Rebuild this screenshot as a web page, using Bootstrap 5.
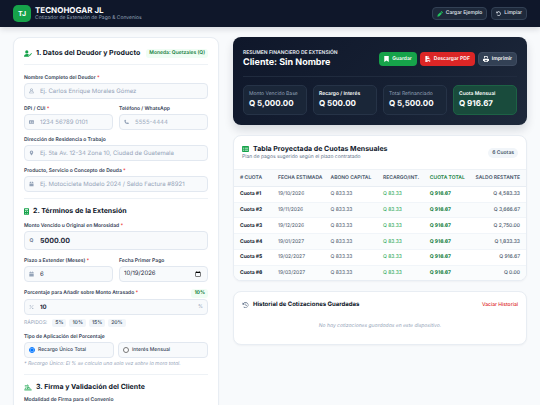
<!DOCTYPE html>
<html lang="es">
<head>
<meta charset="utf-8">
<meta name="viewport" content="width=device-width, initial-scale=1">
<title>TECNOHOGAR JL</title>
<link rel="stylesheet" href="https://cdn.jsdelivr.net/npm/bootstrap@5.3.0/dist/css/bootstrap.min.css">
<style>
:root{--navy:#0f172a;--green:#16a34a;--line:#e8edf3;--muted:#64748b;--soft:#94a3b8}
body{font-family:Inter,"Liberation Sans",sans-serif;font-size:5px;line-height:8px;color:#334155;background:#f8fafc;text-rendering:geometricPrecision}
input,button{text-rendering:inherit}
svg{fill:currentColor;flex:none;display:block}
.topbar{background:var(--navy);box-shadow:0 2px 6px rgba(15,23,42,.15);padding:5px 13px}
.logo{width:18px;height:17px;border-radius:5px;background:var(--green);color:#fff;font-size:7px;font-weight:700}
.brand{font-size:8px;line-height:9px;font-weight:700;color:#fff}
.brand-sub{color:var(--soft);line-height:7px}
.btn{--bs-btn-font-size:5px;--bs-btn-line-height:8px;--bs-btn-padding-x:4px;--bs-btn-padding-y:2px;--bs-btn-border-radius:4px;--bs-btn-font-weight:600;gap:3px;white-space:nowrap}
.btn-top{--bs-btn-color:#e2e8f0;--bs-btn-bg:#1e293b;--bs-btn-border-color:#334155;--bs-btn-line-height:9px;--bs-btn-padding-y:1px;--bs-btn-font-weight:500;--bs-btn-hover-color:#fff;--bs-btn-hover-bg:#334155}
.btn-save{--bs-btn-color:#fff;--bs-btn-bg:#16a34a;--bs-btn-hover-color:#fff;--bs-btn-hover-bg:#15803d}
.btn-pdf{--bs-btn-color:#fff;--bs-btn-bg:#dc2626;--bs-btn-hover-color:#fff;--bs-btn-hover-bg:#b91c1c}
.btn-print{--bs-btn-color:#fff;--bs-btn-bg:#334155;--bs-btn-border-color:#3f4c61;--bs-btn-hover-color:#fff;--bs-btn-hover-bg:#475569}
.actions{gap:3px}
.page{padding:10px 13px}
.page>.row{--bs-gutter-x:14px}
.panel{background:#fff;border:1px solid var(--line);border-radius:8px;box-shadow:0 1px 2px rgba(15,23,42,.04)}
.form-panel{padding:10px}
.head{font-size:7px;line-height:10px;font-weight:700;color:var(--navy);margin:0;white-space:nowrap}
.head svg{color:var(--green)}
.head.history-title{font-size:6px}
.head.history-title svg{color:var(--muted)}
.rule{border-top:1px solid #eef2f6;padding:7px 0 6px}
.rule.tight{padding-bottom:4px}
.first-head{padding-bottom:6px;border-bottom:1px solid #eef2f6;margin-bottom:9px}
.tag{line-height:9px;font-weight:600;border-radius:3px;padding:0 3px;color:#15803d;background:#f0fdf4;white-space:nowrap}
.tag.strong{font-weight:700}
.lbl{display:block;line-height:8px;font-weight:600;margin:0 0 1px;white-space:nowrap}
.lbl i{color:#ef4444;font-style:normal}
.field{margin-bottom:6px}
.terms .field{margin-bottom:7px}
.pair{--bs-gutter-x:6px}
.choices{--bs-gutter-x:4px}
.box{height:16px;display:flex;align-items:center;border:1px solid #e2e8f0;border-radius:4px;background:#f8fafc;padding:0 4px;color:var(--soft)}
.box svg,.box .sign{width:5px;margin-right:6px;text-align:center}
.box input:not([type=radio]){flex:1;min-width:0;width:100%;border:0;outline:0;background:none;padding:0;height:14px;font-size:6px;line-height:10px;color:#1e293b}
.box input::placeholder{color:var(--soft);opacity:1}
.box .sign{color:var(--muted);font-weight:600}
.box.tall{height:19px}
.box.tall input:not([type=radio]){font-weight:700;font-size:7px}
.box input.strong:not([type=radio]){font-weight:700}
.box input[type=date]::-webkit-calendar-picker-indicator{margin:0}
.pct-row{margin-bottom:1px}
.quick-row{margin:4px 0 6px;gap:3px}
.quick-name{color:var(--soft);margin-right:2px}
.quick{border:0;border-radius:2px;background:#f1f5f9;color:#475569;font-weight:600;line-height:8px;padding:0 3px}
.box input[type=radio]{width:6px;height:6px;margin:0 3px 0 0;flex:none}
.choice{color:#334155;font-weight:500;cursor:pointer}
.note{color:var(--soft);font-style:italic;line-height:8px;margin:2px 0 6px}
.summary{background:linear-gradient(135deg,#0f172a,#162033 60%,#1e293b);border-radius:8px;padding:10px;color:#fff;box-shadow:0 5px 10px rgba(15,23,42,.14)}
.over{line-height:8px;font-weight:600;color:#e2e8f0;white-space:nowrap}
.client{font-size:9px;line-height:12px;font-weight:700;margin:0}
.summary-top{padding:2px 0 7px;border-bottom:1px solid #202b3e;margin-bottom:8px}
.summary .row{--bs-gutter-x:6px}
.stat{border:1px solid #263347;border-radius:5px;background:#1a2638;padding:5px;min-height:30px}
.stat span{display:block;line-height:7px;color:var(--soft);white-space:nowrap}
.stat strong{display:block;font-size:8px;line-height:11px;font-weight:700;white-space:nowrap}
.stat.bright span{color:#fff;font-weight:600}
.stat.total{background:#194b3c;border-color:#1d6245}
.plan-panel{margin-top:10px}
.plan-head{padding:8px}
.plan-sub{color:var(--muted);line-height:7px}
.pill{border-radius:8px;background:#f1f5f9;color:#475569;font-weight:600;padding:1px 4px}
.plan{width:100%;height:111px;table-layout:fixed;margin:0;--bs-table-bg:transparent}
.plan>:not(caption)>*>*{padding:0 6px;white-space:nowrap;vertical-align:middle;border-bottom:1px solid #f1f5f9;color:#475569;line-height:8px;box-shadow:none}
.plan>thead>tr>th{height:17px;background:#f8fafc;border-top:1px solid #eef2f6;border-bottom-color:var(--line);font-weight:600}
.plan>tbody>tr:last-child>*{border-bottom:0}
.plan>tbody>tr:nth-child(even){background:#fafcfd}
.plan>tbody>tr>th{color:#0f172a;font-weight:700}
.plan>tbody>tr>td:nth-child(4){color:#16a34a}
.plan>tbody>tr>td:nth-child(5){color:#15803d;font-weight:700}
.plan>tbody>tr>td:nth-child(6){font-weight:500}
.plan>thead>tr>th:nth-child(5){color:#15803d}
.c1{width:13%}.c2{width:18%}.c3{width:18%}.c4{width:16%}.c5{width:14%}
.history{padding:8px 8px 14px;margin-top:10px}
.clear{color:#dc2626;--bs-btn-font-weight:500;--bs-btn-padding-x:0;--bs-btn-padding-y:0;border:0}
.empty{color:var(--soft);font-style:italic;text-align:center;margin:12px 0 0}
</style>
<script src="https://cdn.jsdelivr.net/npm/bootstrap@5.3.0/dist/js/bootstrap.bundle.min.js"></script>
</head>
<body>
<header class="topbar d-flex justify-content-between align-items-center">
  <div class="d-flex align-items-center gap-1">
    <div class="logo d-flex align-items-center justify-content-center">TJ</div>
    <div><div class="brand">TECNOHOGAR JL</div><div class="brand-sub">Cotizador de Extensión de Pago &amp; Convenios</div></div>
  </div>
  <div class="d-flex gap-1">
    <button type="button" class="btn btn-top d-flex align-items-center"><svg width="6" height="6" viewBox="0 0 16 16" style="color:#22c55e"><path d="M1 15l1-5 7-7 4 4-7 7zM10 2l2-2 4 4-2 2z"/></svg>Cargar Ejemplo</button>
    <button type="button" class="btn btn-top d-flex align-items-center"><svg width="5" height="5" viewBox="0 0 16 16"><path d="M1 1v6h6L4.800 4.800A5 5 0 1 1 4 11l-1.800 1.300A7 7 0 1 0 3.300 3.300z"/></svg>Limpiar</button>
  </div>
</header>
<main class="page">
<div class="row">
  <div class="col-5">
    <form class="panel form-panel">
      <div class="first-head d-flex justify-content-between align-items-center">
        <h2 class="head d-flex align-items-center gap-1"><svg width="8" height="7" viewBox="0 0 20 16"><circle cx="7" cy="4" r="4"/><path d="M0 16c0-5 3-7 7-7 3 0 4.500 1 5.500 2.500L10.500 13l3 3zM13.500 13.800l-2-2 1.300-1.300 1.200 1.200 4.200-5.200 1.600 1.200-5.200 6.300z"/></svg>1. Datos del Deudor y Producto</h2>
        <span class="tag">Moneda: Quetzales (Q)</span>
      </div>
      <div class="field"><label class="lbl" for="nombre">Nombre Completo del Deudor <i>*</i></label>
        <div class="box"><svg height="6" viewBox="0 0 16 16"><path fill-rule="evenodd" d="M8 0a4 4 0 0 1 2.500 7.200c2.800 1 4 3.500 4.500 7.800H1c.5-4.300 1.700-6.800 4.500-7.800A4 4 0 0 1 8 0zm0 1.800a2.200 2.200 0 1 0 0 4.500 2.200 2.200 0 0 0 0-4.500zM8 9c-3 0-4.400 1.200-4.900 4.200h9.800C12.400 10.200 11 9 8 9z"/></svg><input id="nombre" type="text" placeholder="Ej. Carlos Enrique Morales Gómez"></div></div>
      <div class="row pair">
        <div class="col-6 field"><label class="lbl" for="dpi">DPI / CUI <i>*</i></label>
          <div class="box"><svg height="6" viewBox="0 0 18 16"><path fill-rule="evenodd" d="M2 2h14a2 2 0 0 1 2 2v9a1.500 1.500 0 0 1-1.500 1.500h-15A1.500 1.500 0 0 1 0 13V4a2 2 0 0 1 2-2zm4 3a2 2 0 1 0 0 4 2 2 0 0 0 0-4zm-3.500 7h7c0-1.500-1-2.300-3.500-2.300S2.500 10.500 2.500 12zM11 5v1.500h5V5zm0 3v1.500h5V8z"/></svg><input id="dpi" type="text" placeholder="1234 56789 0101"></div></div>
        <div class="col-6 field"><label class="lbl" for="tel">Teléfono / WhatsApp</label>
          <div class="box"><svg height="6" viewBox="0 0 16 16"><path d="M5 .5L1.500 1.300C0 9 7 16 14.700 14.500l.8-3.500-4-2-1.800 2A12 12 0 0 1 5 6.300l2-1.800z"/></svg><input id="tel" type="tel" placeholder="5555-4444"></div></div>
      </div>
      <div class="field"><label class="lbl" for="dir">Dirección de Residencia o Trabajo</label>
        <div class="box"><svg height="6" viewBox="0 0 16 16"><path fill-rule="evenodd" d="M8 0a5.500 5.500 0 0 1 5.500 5.500C13.500 9 10 13 8 16 6 13 2.500 9 2.500 5.500A5.500 5.500 0 0 1 8 0zm0 3.500a2 2 0 1 0 0 4 2 2 0 0 0 0-4z"/></svg><input id="dir" type="text" placeholder="Ej. 5ta Av. 12-34 Zona 10, Ciudad de Guatemala"></div></div>
      <div class="field"><label class="lbl" for="prod">Producto, Servicio o Concepto de Deuda <i>*</i></label>
        <div class="box"><svg height="6" viewBox="0 0 16 16"><path d="M3.500 1H7v4H1.500zM9 1h3.500l2 4H9zM1.500 6.500h13V15h-13z"/></svg><input id="prod" type="text" placeholder="Ej. Motocicleta Modelo 2024 / Saldo Factura #8921"></div></div>

      <div class="terms">
      <h2 class="head rule d-flex align-items-center gap-1"><svg width="5" height="7" viewBox="0 0 12 16"><path fill-rule="evenodd" d="M1.500 0h9A1.500 1.500 0 0 1 12 1.500v13a1.500 1.500 0 0 1-1.500 1.500h-9A1.500 1.500 0 0 1 0 14.500v-13A1.500 1.500 0 0 1 1.500 0zM2.500 2.500v2.500h7V2.500zM2.500 7.500v1.500H5V7.500zm4.500 0v1.500h2.500V7.500zm-4.500 4v1.500H5v-1.500zm4.500 0v1.500h2.500v-1.500z"/></svg>2. Términos de la Extensión</h2>
      <div class="field"><label class="lbl" for="monto">Monto Vencido u Original en Morosidad <i>*</i></label>
        <div class="box tall"><span class="sign">Q</span><input id="monto" type="text" inputmode="decimal" value="5000.00"></div></div>
      <div class="row pair">
        <div class="col-6 field"><label class="lbl" for="plazo">Plazo a Extender (Meses) <i>*</i></label>
          <div class="box"><svg height="6" viewBox="0 0 16 16"><path d="M1 2h2.500V0h2v2h5V0h2v2H15v3H1zM1 6h14v10H1z"/></svg><input id="plazo" type="text" inputmode="numeric" value="6"></div></div>
        <div class="col-6 field"><label class="lbl" for="fecha">Fecha Primer Pago</label>
          <div class="box"><input id="fecha" type="date" value="2026-10-19"></div></div>
      </div>
      <div class="pct-row d-flex justify-content-between align-items-center"><label class="lbl" for="pct">Porcentaje para Añadir sobre Monto Atrasado <i>*</i></label><span class="tag strong">10%</span></div>
      <div class="box"><svg height="6" viewBox="0 0 16 16"><path d="M13.500 1.500l1 1-12 12-1-1z"/><circle cx="4" cy="4" r="2"/><circle cx="12" cy="12" r="2"/></svg><input class="strong" id="pct" type="text" inputmode="decimal" value="10"><span>%</span></div>
      <div class="d-flex align-items-center quick-row"><span class="quick-name">RÁPIDOS:</span><button type="button" class="quick">5%</button><button type="button" class="quick">10%</button><button type="button" class="quick">15%</button><button type="button" class="quick">20%</button></div>
      <div class="lbl" id="tipo">Tipo de Aplicación del Porcentaje</div>
      <div class="row choices" role="radiogroup" aria-labelledby="tipo">
        <div class="col-6"><label class="box choice"><input type="radio" name="tipo" checked>Recargo Único Total</label></div>
        <div class="col-6"><label class="box choice"><input type="radio" name="tipo">Interés Mensual</label></div>
      </div>
      <div class="note">* Recargo Único: El % se calcula una sola vez sobre la mora total.</div>
      </div>
      <h2 class="head rule tight d-flex align-items-center gap-1"><svg width="8" height="7" viewBox="0 0 20 16"><path fill="none" stroke="currentColor" stroke-width="2.400" d="M1 14h18M2 4h4c5-6 5 1 2 7 3-4 4-4 4-1 2-2 3-1 3 1M2 11l4-3"/></svg>3. Firma y Validación del Cliente</h2>
      <label class="lbl" for="firma">Modalidad de Firma para el Convenio</label>
      <div class="box"><input id="firma" type="text"></div>
    </form>
  </div>
  <div class="col-7">
    <section class="summary">
      <div class="summary-top d-flex justify-content-between align-items-center">
        <div><div class="over">RESUMEN FINANCIERO DE EXTENSIÓN</div><h2 class="client">Cliente: Sin Nombre</h2></div>
        <div class="d-flex actions">
          <button type="button" class="btn btn-save d-flex align-items-center"><svg width="5" height="6" viewBox="0 0 12 16"><path d="M0 0h12v16l-6-4-6 4z"/></svg>Guardar</button>
          <button type="button" class="btn btn-pdf d-flex align-items-center"><svg width="6" height="6" viewBox="0 0 16 16"><path d="M1 0h6v5h5v3H5v8H1zM8 0l4 4H8zM6 10h2.500a2 2 0 0 1 0 4H7.500v2H6zm5 0h4v1.500h-2.500V13H15v1.300h-2.500V16H11z"/></svg>Descargar PDF</button>
          <button type="button" class="btn btn-print d-flex align-items-center"><svg width="6" height="6" viewBox="0 0 16 16"><path fill-rule="evenodd" d="M3 0h8l2 2v4h-2V3l-1-1H5v4H3zM2 7h12a2 2 0 0 1 2 2v4h-3v3H3v-3H0V9a2 2 0 0 1 2-2zm3 4v3h6v-3z"/></svg>Imprimir</button>
        </div>
      </div>
      <div class="row">
        <div class="col-3"><div class="stat"><span>Monto Vencido Base</span><strong>Q 5,000.00</strong></div></div>
        <div class="col-3"><div class="stat bright"><span>Recargo / Interés</span><strong>Q 500.00</strong></div></div>
        <div class="col-3"><div class="stat"><span>Total Refinanciado</span><strong>Q 5,500.00</strong></div></div>
        <div class="col-3"><div class="stat bright total"><span>Cuota Mensual</span><strong>Q 916.67</strong></div></div>
      </div>
    </section>
    <section class="panel plan-panel overflow-hidden">
      <div class="plan-head d-flex justify-content-between align-items-center">
        <div><h2 class="head d-flex align-items-center gap-1"><svg width="7" height="6" viewBox="0 0 16 14"><path fill-rule="evenodd" d="M1.500 0h13A1.500 1.500 0 0 1 16 1.500v11a1.500 1.500 0 0 1-1.500 1.500h-13A1.500 1.500 0 0 1 0 12.500v-11A1.500 1.500 0 0 1 1.500 0zM2 4v2h3V4zm4.500 0v2H14V4zM2 8.500v2h3v-2zm4.500 0v2H14v-2z"/></svg>Tabla Proyectada de Cuotas Mensuales</h2><div class="plan-sub">Plan de pagos sugerido según el plazo contratado</div></div>
        <span class="pill">6 Cuotas</span>
      </div>
      <table class="table plan">
        <thead><tr><th class="c1"># CUOTA</th><th class="c2">FECHA ESTIMADA</th><th class="c3">ABONO CAPITAL</th><th class="c4">RECARGO/INT.</th><th class="c5">CUOTA TOTAL</th><th class="text-end">SALDO RESTANTE</th></tr></thead>
        <tbody>
          <tr><th>Cuota #1</th><td>19/10/2026</td><td>Q 833.33</td><td>Q 83.33</td><td>Q 916.67</td><td class="text-end">Q 4,583.33</td></tr>
          <tr><th>Cuota #2</th><td>19/11/2026</td><td>Q 833.33</td><td>Q 83.33</td><td>Q 916.67</td><td class="text-end">Q 3,666.67</td></tr>
          <tr><th>Cuota #3</th><td>19/12/2026</td><td>Q 833.33</td><td>Q 83.33</td><td>Q 916.67</td><td class="text-end">Q 2,750.00</td></tr>
          <tr><th>Cuota #4</th><td>19/01/2027</td><td>Q 833.33</td><td>Q 83.33</td><td>Q 916.67</td><td class="text-end">Q 1,833.33</td></tr>
          <tr><th>Cuota #5</th><td>19/02/2027</td><td>Q 833.33</td><td>Q 83.33</td><td>Q 916.67</td><td class="text-end">Q 916.67</td></tr>
          <tr><th>Cuota #6</th><td>19/03/2027</td><td>Q 833.33</td><td>Q 83.33</td><td>Q 916.67</td><td class="text-end">Q 0.00</td></tr>
        </tbody>
      </table>
    </section>
    <section class="panel history">
      <div class="d-flex justify-content-between align-items-center">
        <h2 class="head history-title d-flex align-items-center gap-1"><svg width="7" height="6" viewBox="0 0 16 16"><path d="M0 1v6h6L3.800 4.800A5.800 5.800 0 1 1 4 12l-1.500 1.300A7.500 7.500 0 1 0 2.500 3.200zM8 4h1.500v4l3 2-.8 1.200L8 9z"/></svg>Historial de Cotizaciones Guardadas</h2>
        <button type="button" class="btn clear">Vaciar Historial</button>
      </div>
      <p class="empty">No hay cotizaciones guardadas en este dispositivo.</p>
    </section>
  </div>
</div>
</main>
</body>
</html>
